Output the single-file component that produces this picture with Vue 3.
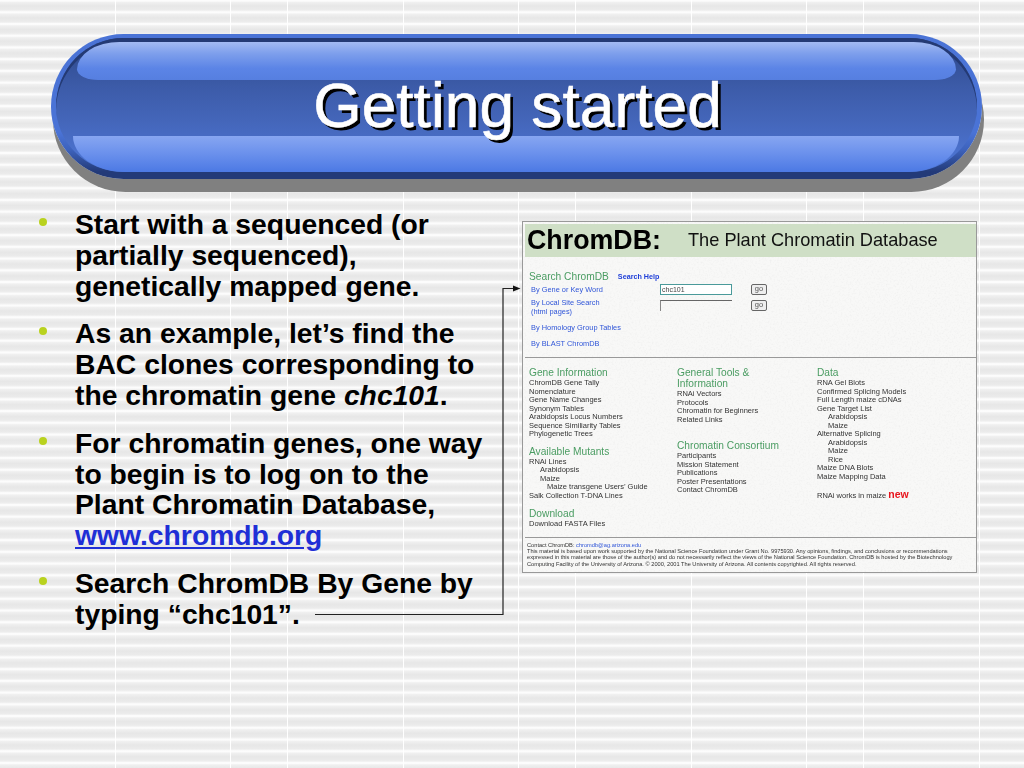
<script setup>
const columns = [
  [
    { title: ['Gene Information'], items: [['ChromDB Gene Tally', 0], ['Nomenclature', 0], ['Gene Name Changes', 0], ['Synonym Tables', 0], ['Arabidopsis Locus Numbers', 0], ['Sequence Similiarity Tables', 0], ['Phylogenetic Trees', 0]], gap: 0 },
    { title: ['Available Mutants'], items: [['RNAi Lines', 0], ['Arabidopsis', 1], ['Maize', 1], ['Maize transgene Users’ Guide', 2], ['Salk Collection T-DNA Lines', 0]], gap: 7 },
    { title: ['Download'], items: [['Download FASTA Files', 0]], gap: 8 }
  ],
  [
    { title: ['General Tools &', 'Information'], items: [['RNAi Vectors', 0], ['Protocols', 0], ['Chromatin for Beginners', 0], ['Related Links', 0]], gap: 0 },
    { title: ['Chromatin Consortium'], items: [['Participants', 0], ['Mission Statement', 0], ['Publications', 0], ['Poster Presentations', 0], ['Contact ChromDB', 0]], gap: 16 }
  ],
  [
    { title: ['Data'], items: [['RNA Gel Blots', 0], ['Confirmed Splicing Models', 0], ['Full Length maize cDNAs', 0], ['Gene Target List', 0], ['Arabidopsis', 1], ['Maize', 1], ['Alternative Splicing', 0], ['Arabidopsis', 1], ['Maize', 1], ['Rice', 1], ['Maize DNA Blots', 0], ['Maize Mapping Data', 0]], gap: 0 }
  ]
]
</script>

<template>
  <div class="page">
    <header class="bar">
      <div class="gloss-top"></div>
      <div class="gloss-bottom"></div>
      <h1>Getting started</h1>
    </header>

    <main class="main">
      <ul class="points">
        <li><span>Start with a sequenced (or partially sequenced), genetically mapped gene.</span></li>
        <li><span>As an example, let’s find the BAC clones corresponding to the chromatin gene <em>chc101</em>.</span></li>
        <li><span>For chromatin genes, one way to begin is to log on to the Plant Chromatin Database, <a>www.chromdb.org</a></span></li>
        <li><span>Search ChromDB By Gene by typing “chc101”.</span></li>
      </ul>

      <section class="card">
        <svg class="noise" width="100%" height="100%" aria-hidden="true">
          <filter id="paper">
            <feTurbulence type="fractalNoise" baseFrequency="0.55" numOctaves="3" seed="4" />
            <feColorMatrix values="0 0 0 0 0.65  0 0 0 0 0.65  0 0 0 0 0.65  0.3 0.3 0 0 -0.28" />
          </filter>
          <rect width="100%" height="100%" filter="url(#paper)" />
        </svg>

        <div class="card-head">
          <strong>ChromDB:</strong>
          <span>The Plant Chromatin Database</span>
        </div>

        <div class="search">
          <div class="search-title">
            <span class="heading">Search ChromDB</span>
            <span class="help">Search Help</span>
          </div>
          <div class="form-row first">
            <span class="link">By Gene or Key Word</span>
            <span class="input active">chc101</span>
            <span class="go">go</span>
          </div>
          <div class="form-row second">
            <span class="link">By Local Site Search<br />(html pages)</span>
            <span class="input"></span>
            <span class="go">go</span>
          </div>
          <div class="link single">By Homology Group Tables</div>
          <div class="link single">By BLAST ChromDB</div>
        </div>

        <div class="directory">
          <div v-for="(col, c) in columns" :key="c" class="col" :class="'col' + c">
            <div v-for="group in col" :key="group.title[0]" class="group" :style="{ marginTop: group.gap + 'px' }">
              <div v-for="t in group.title" :key="t" class="heading">{{ t }}</div>
              <div v-for="(item, i) in group.items" :key="i" class="item" :class="'indent' + item[1]">{{ item[0] }}</div>
            </div>
            <div v-if="c === 2" class="item news">RNAi works in maize <b>new</b></div>
          </div>
        </div>

        <footer class="legal">
          <div>Contact ChromDB: <span class="mail">chromdb@ag.arizona.edu</span></div>
          <div>This material is based upon work supported by the National Science Foundation under Grant No. 9975930. Any opinions, findings, and conclusions or recommendations</div>
          <div>expressed in this material are those of the author(s) and do not necessarily reflect the views of the National Science Foundation. ChromDB is hosted by the Biotechnology</div>
          <div>Computing Facility of the University of Arizona. © 2000, 2001 The University of Arizona. All contents copyrighted. All rights reserved.</div>
        </footer>
      </section>
    </main>

    <svg class="callout" width="1024" height="768" aria-hidden="true">
      <path d="M315 614.5H503V288.5H514" fill="none" stroke="#222" stroke-width="1.2" />
      <path d="M520.5 288.5L513 285.5V291.5Z" fill="#111" />
    </svg>
  </div>
</template>

<style>
html, body { margin: 0; background: #eee; }
</style>

<style scoped>
.page {
  position: relative;
  width: 1024px;
  height: 768px;
  overflow: hidden;
  box-sizing: border-box;
  padding-top: 34px;
  font-family: "Liberation Sans", Arial, sans-serif;
  background-color: #eee;
  background-image:
    linear-gradient(90deg, transparent 0, transparent 115px, #fff 115px, #fff 116.5px, transparent 116.5px, transparent 230px, #fff 230px, #fff 231.5px, transparent 231.5px, transparent 287.5px, #fff 287.5px, #fff 288px),
    repeating-linear-gradient(180deg, #fcfcfc 0, #fcfcfc 1px, #f0f0f0 2.4px, #e7e7e7 6px, #ebebeb 9.6px, #f2f2f2 10.8px, #fcfcfc 11.73px);
  background-size: 288px 100%, 100% 100%;
}

.bar {
  position: relative;
  box-sizing: border-box;
  width: 931px;
  height: 145px;
  margin-left: 51px;
  display: flex;
  align-items: center;
  justify-content: center;
  border-style: solid;
  border-color: transparent;
  border-width: 4px 5px 7px;
  border-radius: 73px;
  background:
    linear-gradient(180deg, #2c4688 0, #3c5ba8 36%, #4466ba 62%, #4f78d8 100%) padding-box,
    linear-gradient(180deg, #4a73d6 0, #4a73d6 68%, #3d62bb 80%, #233a78 95%, #233a78 100%) border-box;
  box-shadow: inset 0 4px 0 #243a74, 2px 13px 0 #808080;
}

.gloss-top {
  position: absolute;
  left: 21px;
  right: 21px;
  top: 4px;
  height: 38px;
  border-radius: 56px 56px 28px 28px / 36px 36px 14px 14px;
  background: linear-gradient(180deg, #a3baf2 0, #7e9fec 30%, #5b84e6 70%, #567fe0 100%);
}

.gloss-bottom {
  position: absolute;
  left: 17px;
  right: 18px;
  bottom: 0;
  height: 36px;
  border-radius: 0 0 52px 52px / 0 0 36px 36px;
  background: linear-gradient(180deg, #87a6f1 0, #6a90ec 50%, #4c79e4 100%);
}

h1 {
  position: relative;
  left: 1px;
  top: 1px;
  margin: 0;
  color: #fff;
  font-size: 62.3px;
  font-weight: 400;
  line-height: 70px;
  -webkit-text-stroke: 0.6px #fff;
  text-shadow: 3px 3px 0 #000;
}

.main {
  display: flex;
  align-items: flex-start;
}

.points {
  box-sizing: border-box;
  width: 522px;
  margin: 30px 0 0;
  padding: 0 32px 0 39px;
  list-style: none;
  color: #000;
  font-size: 28.3px;
  font-weight: 700;
  line-height: 30.9px;
}

.points li {
  display: flex;
  gap: 28px;
  margin-bottom: 16.6px;
}

.points li::before {
  content: "";
  flex: 0 0 8px;
  height: 8px;
  margin-top: 9px;
  border-radius: 50%;
  background: #b9d21f;
}

.points em { font-style: italic; }

.points a {
  color: #1f2fd6;
  text-decoration: underline;
}

.card {
  position: relative;
  box-sizing: border-box;
  width: 455px;
  height: 352px;
  margin-top: 42px;
  padding: 2px 0 0 2px;
  border: 1.5px solid #999;
  background: #f8f8f7;
  color: #333;
  filter: blur(0.25px);
}

.noise {
  position: absolute;
  inset: 0;
}

.card-head {
  position: relative;
  display: flex;
  align-items: center;
  height: 33px;
  background: #cfdfc6;
  color: #111;
  padding-left: 2px;
}

.card-head strong {
  width: 161px;
  font-size: 26.8px;
  color: #000;
}

.card-head span { font-size: 18.2px; }

.search {
  position: relative;
  height: 101px;
  padding: 13px 0 0 4px;
  box-sizing: border-box;
  border-bottom: 1px solid #999;
}

.heading {
  color: #4a9c62;
  font-size: 10.2px;
  line-height: 11px;
}

.search-title {
  display: flex;
  align-items: center;
  height: 12px;
}

.help {
  margin-left: 9px;
  color: #1f3fd8;
  font-size: 7.2px;
  font-weight: 700;
}

.link {
  color: #2f55d8;
  font-size: 7.4px;
  line-height: 9px;
}

.form-row {
  display: grid;
  grid-template-columns: 110px 72px 16px;
  column-gap: 19px;
  padding-left: 2px;
}

.first { height: 14px; margin-top: 2px; align-items: start; }
.first .link { padding-top: 1px; }
.second { height: 22px; }
.second .input, .second .go { margin-top: 2px; }

.input {
  box-sizing: border-box;
  height: 11px;
  padding-left: 1px;
  color: #444;
  font-size: 7px;
  line-height: 9px;
  border-top: 1px solid #666;
  border-left: 1px solid #888;
}

.input.active {
  border: 1px solid #4a9a9a;
  background: #fff;
}

.go {
  box-sizing: border-box;
  height: 11px;
  border: 1px solid #666;
  border-radius: 2px;
  background: #eee;
  color: #555;
  font-size: 7.5px;
  line-height: 8px;
  text-align: center;
}

.single {
  height: 16px;
  padding-left: 2px;
  line-height: 16px;
}

.directory {
  position: relative;
  display: grid;
  grid-template-columns: 148px 140px 1fr;
  height: 180px;
  padding: 9px 0 0 4px;
  box-sizing: border-box;
  border-bottom: 1px solid #999;
}

.item {
  font-size: 7.5px;
  line-height: 8.5px;
  white-space: nowrap;
}

.heading + .item { margin-top: 1px; }

.indent1 { padding-left: 11px; }
.indent2 { padding-left: 18px; }

.news {
  margin-top: 7px;
  line-height: 12px;
}

.news b {
  color: #e8141c;
  font-size: 10.5px;
}

.legal {
  position: relative;
  padding: 4px 0 0 2px;
  font-size: 5.66px;
  line-height: 6.2px;
  white-space: nowrap;
  color: #333;
}

.mail { color: #2f55d8; }

.callout {
  position: absolute;
  left: 0;
  top: 0;
  pointer-events: none;
}
</style>
